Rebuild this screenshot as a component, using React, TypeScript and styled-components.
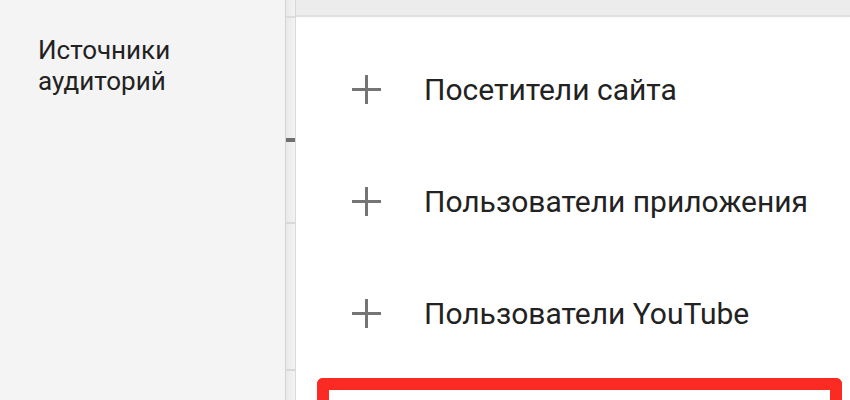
import styled, { createGlobalStyle } from "styled-components";

const GlobalStyle = createGlobalStyle`
  html, body {
    margin: 0;
    padding: 0;
    background: #ffffff;
  }
  body {
    font-family: Roboto, "Noto Sans", "Liberation Sans", sans-serif;
    -webkit-font-smoothing: antialiased;
  }
`;

const items = ["Посетители сайта", "Пользователи приложения", "Пользователи YouTube"];

// segments of the thin rail between sidebar and panel
const railSegments = [
  { height: 16, line: "#dcdcdc" },
  { height: 118, line: "transparent" },
  { height: 4, line: "transparent", dark: true },
  { height: 80, line: "#d8d8d8" },
  { height: 145, line: "#d8d8d8" },
];

export default function App() {
  return (
    <>
      <GlobalStyle />
      <Page>
        <Sidebar>
          <SidebarTitle>
            Источники
            <br />
            аудиторий
          </SidebarTitle>
        </Sidebar>
        <Rail>
          {railSegments.map((s, i) => (
            <RailSegment key={i} $h={s.height} $line={s.line} $dark={s.dark} />
          ))}
        </Rail>
        <Panel>
          <PanelHeader />
          <List>
            {items.map((label) => (
              <Row key={label}>
                <PlusIcon />
                <RowLabel>{label}</RowLabel>
              </Row>
            ))}
          </List>
          <Highlight />
        </Panel>
      </Page>
    </>
  );
}

function PlusIcon() {
  return (
    <IconBox>
      <svg width="29" height="29" viewBox="0 0 29 29">
        <rect x="0" y="13" width="29" height="3" fill="#757575" />
        <rect x="13" y="0" width="3" height="29" fill="#757575" />
      </svg>
    </IconBox>
  );
}

const Page = styled.div`
  display: flex;
  width: 850px;
  height: 400px;
  overflow: hidden;
`;

const Sidebar = styled.div`
  width: 286px;
  flex-shrink: 0;
  background: #f4f4f4;
  border-right: 1px solid #d4d4d4;
  padding: 35px 0 0 38px;
  box-sizing: border-box;
`;

const SidebarTitle = styled.div`
  font-size: 26px;
  line-height: 31px;
  color: #222222;
`;

const Rail = styled.div`
  width: 9px;
  flex-shrink: 0;
  display: flex;
  flex-direction: column;
  background: linear-gradient(to right, #e9e9e9, #f3f3f3);
  border-right: 1px solid #dadada;
`;

const RailSegment = styled.div<{ $h: number; $line: string; $dark?: boolean }>`
  height: ${(p) => p.$h}px;
  flex-shrink: 0;
  background: ${(p) => (p.$dark ? "#6f6f6f" : "transparent")};
  border-bottom: ${(p) => (p.$dark ? "none" : `2px solid ${p.$line}`)};
`;

const Panel = styled.div`
  flex: 1;
  display: flex;
  flex-direction: column;
  background: #ffffff;
`;

const PanelHeader = styled.div`
  height: 15px;
  flex-shrink: 0;
  background: #ececec;
  border-bottom: 2px solid #e0e0e0;
  box-shadow: 0 1px 3px rgba(0, 0, 0, 0.04);
`;

const List = styled.div`
  display: flex;
  flex-direction: column;
  padding-top: 16px;
`;

const Row = styled.div`
  height: 112px;
  display: flex;
  align-items: center;
  padding-left: 56px;
`;

const IconBox = styled.div`
  width: 29px;
  height: 29px;
  display: flex;
  margin-right: 43px;
`;

const RowLabel = styled.div`
  font-size: 30px;
  color: #222222;
`;

const Highlight = styled.div`
  margin: 9px 8px 0 21px;
  height: 60px;
  border: 12px solid #fb2a22;
  border-bottom: none;
  border-radius: 6px 6px 0 0;
  flex-shrink: 0;
`;
